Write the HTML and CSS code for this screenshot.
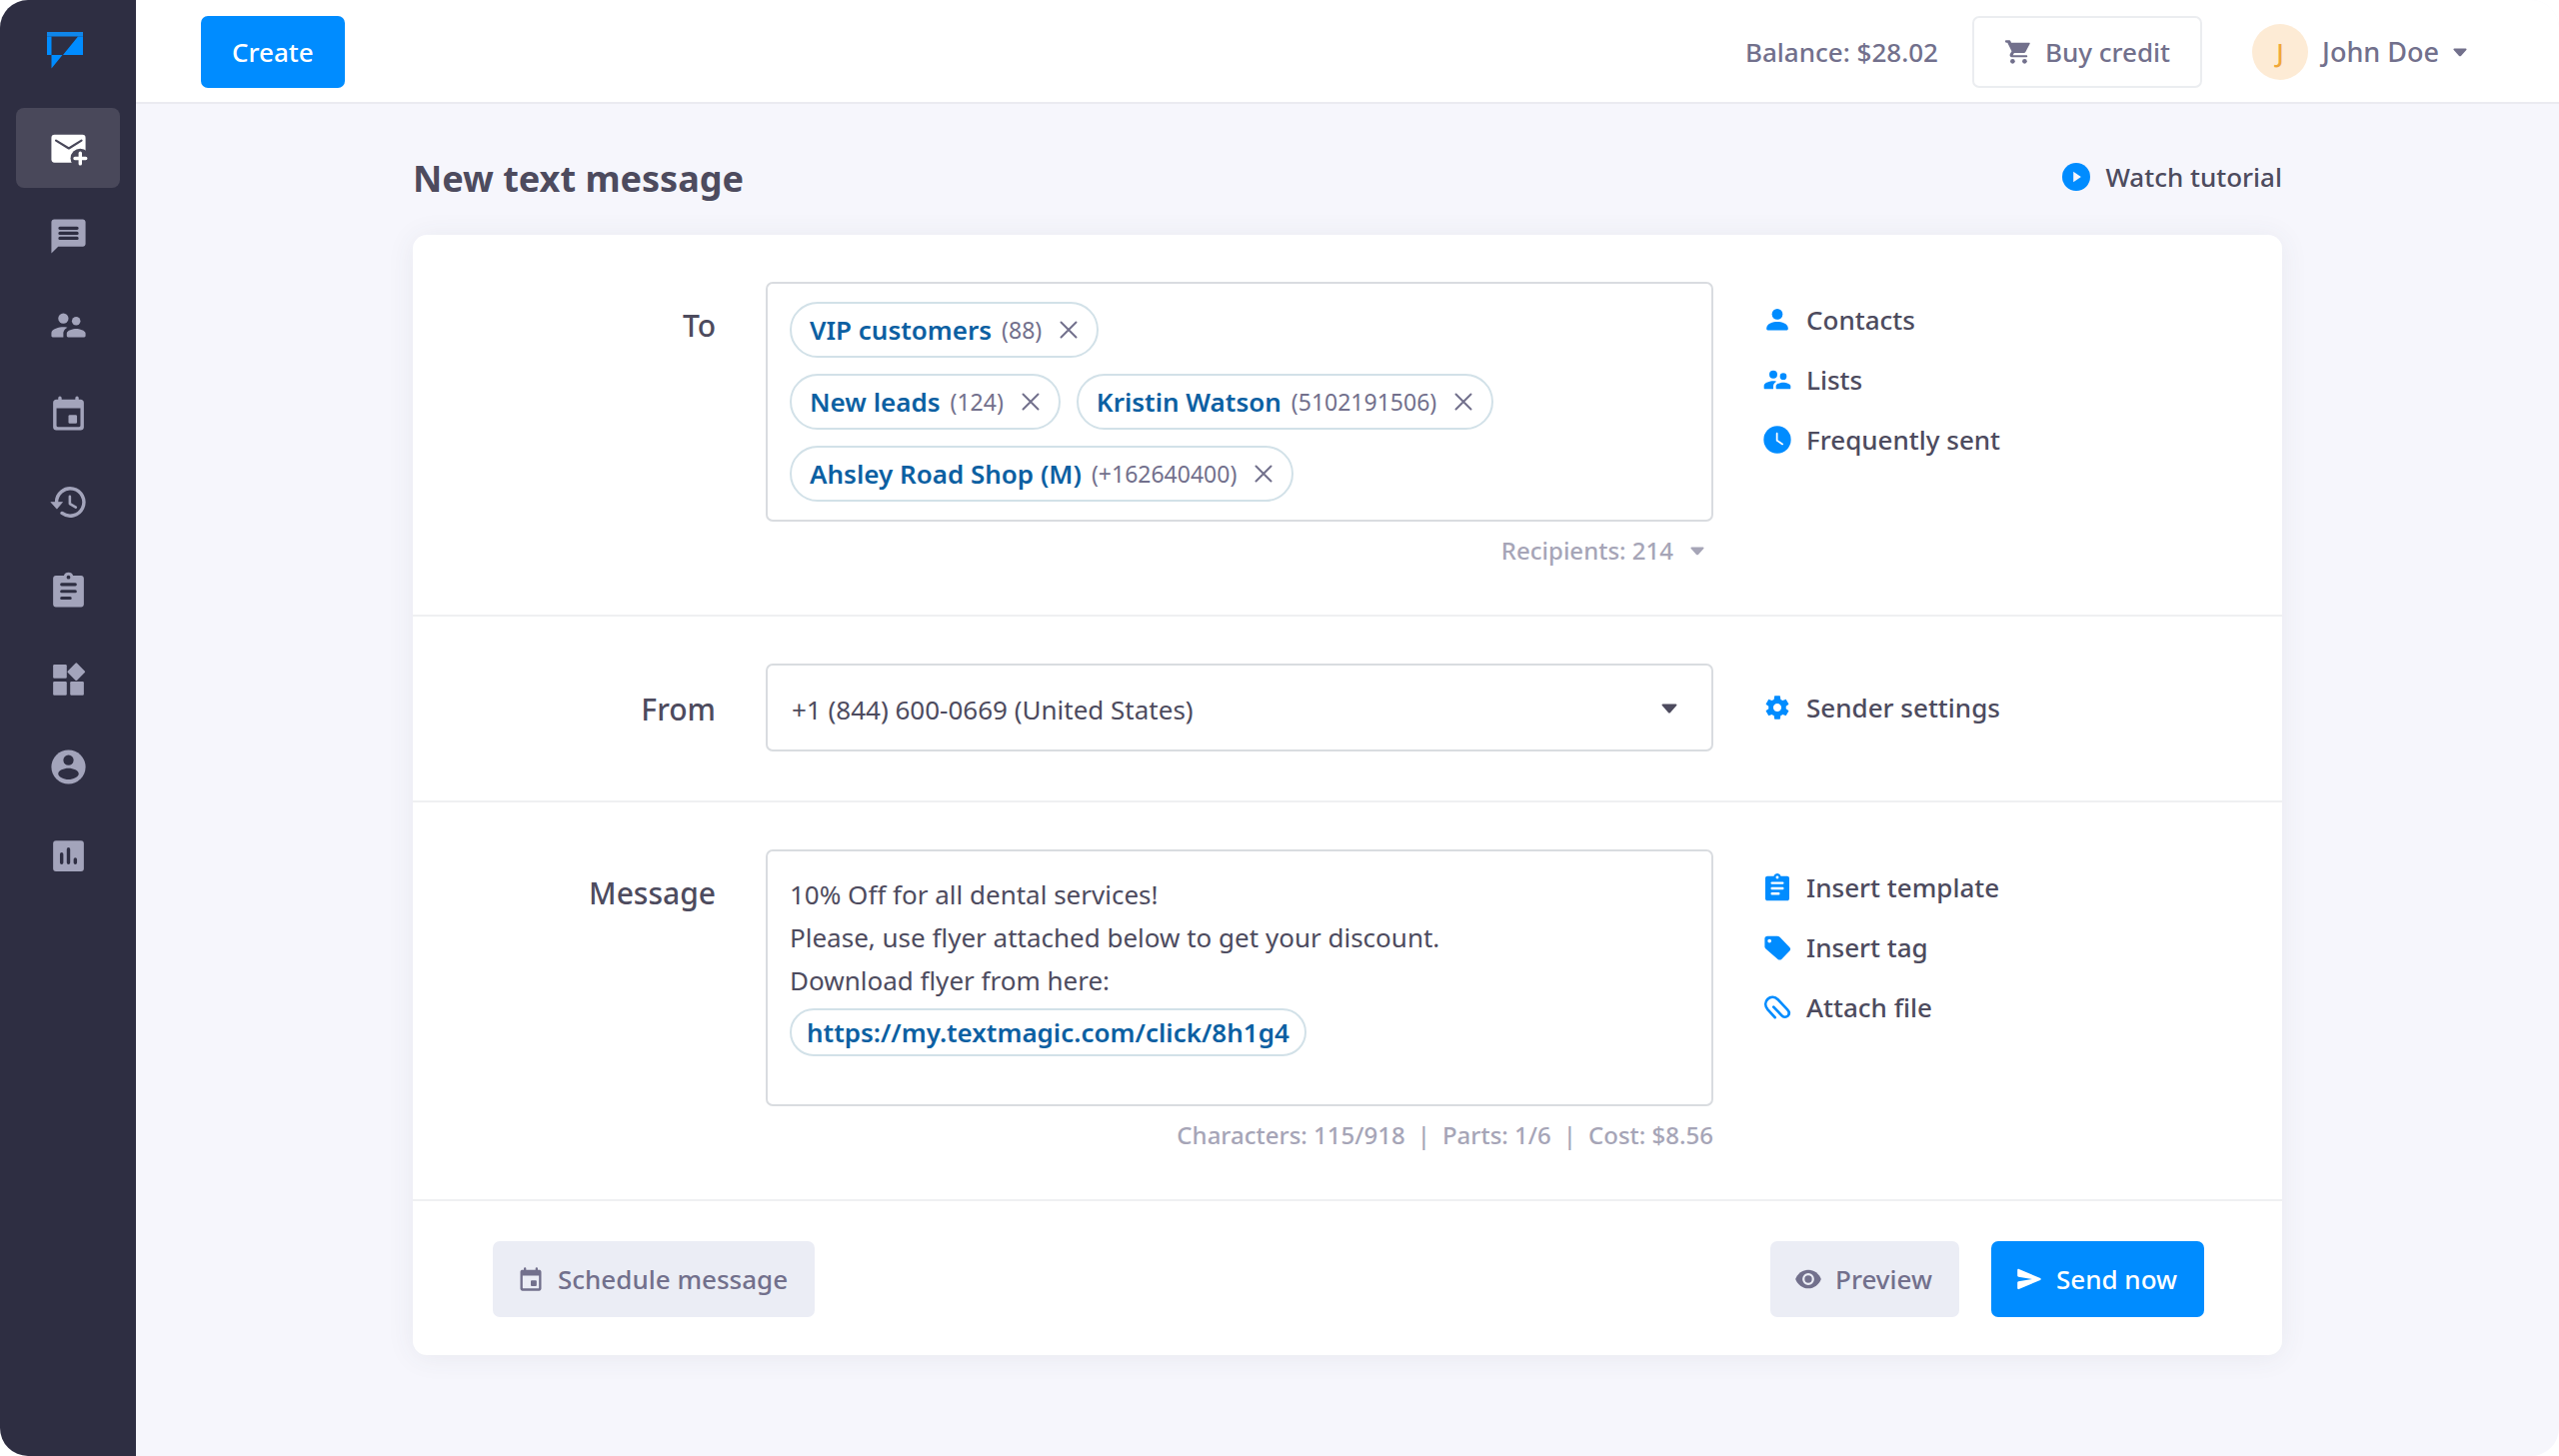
FILE: index.html
```html
<!DOCTYPE html>
<html lang="en">
<head>
<meta charset="utf-8">
<title>New text message</title>
<link rel="stylesheet" href="styles.css">
</head>
<body>
<svg class="sprite" aria-hidden="true">
  <symbol id="i-compose" viewBox="0 0 24 24"><rect x="2" y="4" width="20" height="16.3" rx="1.8"/><path class="cut" stroke-width="1.3" d="M4.7 7.4l7.5 4.6 7.4-4.6"/><circle class="hole" cx="18.9" cy="17.8" r="5.7"/><path d="M18.9 14.8v6.2M15.8 17.9h6.3" fill="none" stroke="currentColor" stroke-width="2" stroke-linecap="round"/></symbol>
  <symbol id="i-chat" viewBox="0 0 24 24"><path d="M20.4 2H3.6C2.7 2 2 2.7 2 3.6V22l4-4h14.400c.9 0 1.600-.7 1.600-1.600V3.600c0-.9-.7-1.600-1.600-1.600z"/><path class="cut" stroke-width="1.900" d="M7 7.200h10M7 10.200h10M7 13.100h10"/></symbol>
  <symbol id="i-people" viewBox="0 0 24 24"><circle cx="9" cy="8" r="3"/><circle cx="16.500" cy="9.500" r="2.500"/><path d="M16.500 14c-1.830 0-5.500.92-5.500 2.750V18.200c0 .5.3.8.8.8h9.400c.5 0 .8-.3.8-.8v-1.450c0-1.830-3.670-2.750-5.500-2.750zM9 13c-2.330 0-7 1.170-7 3.500v1.700c0 .5.3.8.8.8H9v-2.250c0-.85.33-2.340 2.370-3.470C10.500 13.100 9.660 13 9 13z"/></symbol>
  <symbol id="i-calendar" viewBox="0 0 24 24"><path fill-rule="evenodd" d="M19.200 4H18V3a1 1 0 0 0-2 0v1H8V3a1 1 0 0 0-2 0v1H4.800C3.800 4 3 4.800 3 5.800v14.400c0 1 .8 1.800 1.800 1.800h14.400c1 0 1.800-.8 1.800-1.800V5.800c0-1-.8-1.800-1.800-1.800zM18.200 20H5.800c-.5 0-.8-.3-.8-.8V9h14v10.200c0 .5-.3.8-.8.8z"/><rect x="12" y="13" width="5" height="5" rx=".8"/></symbol>
  <symbol id="i-history" viewBox="0 0 24 24"><path d="M5 12a8 8 0 1 1 3.200 6.400" fill="none" stroke="currentColor" stroke-width="2" stroke-linecap="round"/><path d="M1.700 12h6.800l-3.300 3.900z" stroke="currentColor" stroke-width=".4" stroke-linejoin="round"/><path d="M12.800 8.600v4.300l3.500 2.100" fill="none" stroke="currentColor" stroke-width="1.500" stroke-linecap="round" stroke-linejoin="round"/></symbol>
  <symbol id="i-clipboard" viewBox="0 0 24 24"><path d="M19.400 3.500h-4.700a2.850 2.850 0 0 0-5.400 0H4.600C3.700 3.500 3 4.200 3 5.100v15.300c0 .9.7 1.600 1.600 1.600h14.800c.9 0 1.600-.7 1.600-1.600V5.100c0-.9-.7-1.600-1.600-1.600z"/><circle class="hole" cx="12" cy="4.500" r="1.100"/><path class="cut" stroke-width="1.800" d="M8 8.700h8M8 12.700h8M8 16.700h5"/></symbol>
  <symbol id="i-widgets" viewBox="0 0 24 24"><rect x="3" y="3.500" width="8" height="8" rx=".7"/><rect x="3" y="13.500" width="8" height="8" rx=".7"/><rect x="13" y="13.500" width="8" height="8" rx=".7"/><rect x="12.700" y="3.900" width="7.700" height="7.700" rx=".7" transform="rotate(45 16.550 7.750)"/></symbol>
  <symbol id="i-account" viewBox="0 0 24 24"><circle cx="12" cy="12" r="10"/><circle class="hole" cx="12" cy="8" r="3"/><path class="hole" d="M12 12.800c-2.800 0-6 1.400-6 3.100 0 1.800 3.200 3.400 6 3.400s6-1.600 6-3.400c0-1.700-3.200-3.100-6-3.100z"/></symbol>
  <symbol id="i-chart" viewBox="0 0 24 24"><rect x="3" y="3" width="18" height="18" rx="1.700"/><path class="cut" stroke-width="2" d="M8 11v5M12 8v8M16 14v2"/></symbol>
  <symbol id="i-cart" viewBox="0 0 24 24"><path d="M1.800 2h2.700c.4 0 .7.200.9.600L6 4h15.400c.5 0 .8.400.6.900l-3.600 6.800c-.4.700-1 1.100-1.800 1.100H8.500l-1.100 2h11.600c.5 0 .9.400.9.900s-.4.900-.9.900H6.700c-1.500 0-2.400-1.500-1.700-2.800l1.400-2.500L2.800 4h-1c-.6 0-1-.4-1-1s.4-1 1-1z"/><path d="M6 4.500h15l-4.300 7.700H8z"/><circle cx="7.200" cy="20" r="2"/><circle cx="17.500" cy="20" r="2"/></symbol>
  <symbol id="i-play" viewBox="0 0 24 24"><circle cx="12" cy="12" r="12"/><path class="hole" d="M9.600 7.600v8.800L16.200 12z"/></symbol>
  <symbol id="i-person" viewBox="0 0 24 24"><circle cx="12" cy="7.200" r="4.600"/><path d="M12 13.800c-3.700 0-9.200 1.700-9.200 5.200v1c0 .6.400 1 1 1h16.400c.6 0 1-.4 1-1v-1c0-3.500-5.500-5.200-9.200-5.200z"/></symbol>
  <symbol id="i-clock" viewBox="0 0 24 24"><circle cx="12" cy="12" r="11.700"/><path class="cut" stroke-width="1.500" d="M11.700 6.600v6l4.700 3.200"/></symbol>
  <symbol id="i-gear" viewBox="0 0 24 24"><path fill-rule="evenodd" d="M19.430 12.980c.04-.32.07-.64.07-.98s-.03-.66-.07-.98l2.110-1.650c.19-.15.24-.42.12-.64l-2-3.460c-.12-.22-.39-.3-.61-.22l-2.490 1c-.52-.4-1.080-.73-1.690-.98l-.38-2.650C14.460 2.180 14.250 2 14 2h-4c-.25 0-.46.18-.49.42l-.38 2.650c-.61.25-1.170.59-1.690.98l-2.490-1c-.23-.09-.49 0-.61.22l-2 3.460c-.13.22-.07.49.12.64l2.110 1.650c-.04.32-.07.65-.07.98s.03.66.07.98l-2.110 1.650c-.19.15-.24.42-.12.64l2 3.460c.12.22.39.3.61.22l2.490-1c.52.4 1.080.73 1.690.98l.38 2.650c.03.24.24.42.49.42h4c.25 0 .46-.18.49-.42l.38-2.650c.61-.25 1.170-.59 1.690-.98l2.490 1c.23.09.49 0 .61-.22l2-3.460c.12-.22.07-.49-.12-.64l-2.110-1.650zM12 15.500c-1.930 0-3.500-1.570-3.500-3.500s1.570-3.500 3.500-3.500 3.500 1.570 3.500 3.500-1.570 3.500-3.500 3.500z"/></symbol>
  <symbol id="i-tag" viewBox="0 0 24 24"><path fill-rule="evenodd" d="M22.600 11.900L14.200 3.300C13.500 2.600 13 2.300 12 2.300H3.500C2.200 2.300 1.200 3.300 1.200 4.600v6.600c0 .9.200 1.400.9 2l10.400 9c.9.800 2.200.8 3.100 0l7-7.100c.9-.9.9-2.300 0-3.200zM5.300 8.100a1.600 1.600 0 1 1 0-3.200 1.600 1.600 0 0 1 0 3.200z"/></symbol>
  <symbol id="i-clip" viewBox="0 0 24 24"><path fill="none" stroke="currentColor" stroke-width="2.300" stroke-linecap="round" stroke-linejoin="round" d="M10 20.700L3.900 14C1.300 11 1.300 7.300 3.800 4.900c2.500-2.300 6.100-2.200 8.700.4l8.200 8.700c1.700 1.900 1.700 4 .3 5.400-1.500 1.400-3.700 1.200-5.300-.5L8.800 11.700"/></symbol>
  <symbol id="i-eye" viewBox="0 0 24 24"><path d="M12 4C7 4 2.700 7.300 1 12c1.700 4.700 6 8 11 8s9.300-3.300 11-8c-1.700-4.700-6-8-11-8z"/><circle class="cut" cx="12" cy="12" r="4.100" stroke-width="1.900"/></symbol>
  <symbol id="i-send" viewBox="0 0 24 24"><path d="M3.200 20.600l18.300-7.800c.8-.3.8-1.400 0-1.700L3.200 3.400c-.6-.3-1.300.2-1.300.8v4.900c0 .5.4.9.900 1L14.500 12 2.800 13.900c-.5.1-.9.500-.9 1v4.900c0 .6.700 1.100 1.300.8z"/></symbol>
  <symbol id="i-close" viewBox="0 0 18 18"><path fill="none" stroke="currentColor" stroke-width="2" stroke-linecap="round" d="M1.500 1.500l15 15M16.500 1.500l-15 15"/></symbol>
  <symbol id="i-caret" viewBox="0 0 16 10"><path d="M1.500.5h13c.9 0 1.300 1 .7 1.600L9.100 8.900c-.6.700-1.600.7-2.200 0L.8 2.100C.2 1.500.6.500 1.500.5z"/></symbol>
</svg>

<div class="app">
  <aside class="sidebar">
    <a class="logo" href="#" aria-label="Home">
      <svg class="logo-mark" viewBox="0 0 36 37"><path fill="#0f86ea" d="M0 0h36v4.500H0z"/><path fill="#008cff" d="M0 4.500h4.500V23H0zM31 4.500h5V23H16zM4.500 23h11l-11 13.500z"/></svg>
    </a>
    <nav class="nav" aria-label="Main">
      <a class="nav-item nav-item--active" href="#" aria-label="Compose" aria-current="page"><svg><use href="#i-compose"/></svg></a>
      <a class="nav-item" href="#" aria-label="Chats"><svg><use href="#i-chat"/></svg></a>
      <a class="nav-item" href="#" aria-label="Contacts"><svg><use href="#i-people"/></svg></a>
      <a class="nav-item" href="#" aria-label="Calendar"><svg><use href="#i-calendar"/></svg></a>
      <a class="nav-item" href="#" aria-label="History"><svg><use href="#i-history"/></svg></a>
      <a class="nav-item" href="#" aria-label="Templates"><svg><use href="#i-clipboard"/></svg></a>
      <a class="nav-item" href="#" aria-label="Services"><svg><use href="#i-widgets"/></svg></a>
      <a class="nav-item" href="#" aria-label="Account"><svg><use href="#i-account"/></svg></a>
      <a class="nav-item" href="#" aria-label="Reports"><svg><use href="#i-chart"/></svg></a>
    </nav>
  </aside>

  <div class="page">
    <header class="topbar">
      <button class="btn btn--primary btn--create" type="button">Create</button>
      <div class="topbar-right">
        <span class="balance">Balance: $28.02</span>
        <button class="btn btn--outline" type="button"><svg class="icon-28"><use href="#i-cart"/></svg>Buy credit</button>
        <button class="user" type="button"><span class="avatar">J</span><span>John Doe</span><svg class="caret"><use href="#i-caret"/></svg></button>
      </div>
    </header>

    <main class="content">
      <div class="heading">
        <h1>New text message</h1>
        <a class="link link--tutorial" href="#"><svg class="icon-28"><use href="#i-play"/></svg>Watch tutorial</a>
      </div>

      <form class="card">
        <section class="row">
          <span class="label" id="to-label">To</span>
          <div class="field">
            <div class="box recipients" role="group" aria-labelledby="to-label">
              <div class="chips">
                <span class="chip"><b>VIP customers</b><span class="count">(88)</span><button type="button" aria-label="Remove VIP customers"><svg><use href="#i-close"/></svg></button></span>
              </div>
              <div class="chips">
                <span class="chip"><b>New leads</b><span class="count">(124)</span><button type="button" aria-label="Remove New leads"><svg><use href="#i-close"/></svg></button></span>
                <span class="chip"><b>Kristin Watson</b><span class="count">(5102191506)</span><button type="button" aria-label="Remove Kristin Watson"><svg><use href="#i-close"/></svg></button></span>
              </div>
              <div class="chips">
                <span class="chip"><b>Ahsley Road Shop (M)</b><span class="count">(+162640400)</span><button type="button" aria-label="Remove Ahsley Road Shop (M)"><svg><use href="#i-close"/></svg></button></span>
              </div>
            </div>
            <button class="meta meta--toggle" type="button">Recipients: 214<svg class="caret"><use href="#i-caret"/></svg></button>
          </div>
          <div class="links">
            <a class="link" href="#"><svg class="icon-28"><use href="#i-person"/></svg>Contacts</a>
            <a class="link" href="#"><svg class="icon-32"><use href="#i-people"/></svg>Lists</a>
            <a class="link" href="#"><svg class="icon-28"><use href="#i-clock"/></svg>Frequently sent</a>
          </div>
        </section>

        <section class="row row--center">
          <label class="label" for="from">From</label>
          <div class="field select">
            <select class="box" id="from"><option>+1 (844) 600-0669 (United States)</option></select>
            <svg class="caret"><use href="#i-caret"/></svg>
          </div>
          <div class="links">
            <a class="link" href="#"><svg class="icon-28"><use href="#i-gear"/></svg>Sender settings</a>
          </div>
        </section>

        <section class="row">
          <span class="label" id="message-label">Message</span>
          <div class="field">
            <div class="box message" role="textbox" aria-multiline="true" aria-labelledby="message-label" contenteditable="true" spellcheck="false"><p>10% Off for all dental services!</p><p>Please, use flyer attached below to get your discount.</p><p>Download flyer from here:</p><a class="pill" href="#">https://my.textmagic.com/click/8h1g4</a></div>
            <div class="meta"><span>Characters: 115/918</span><span>|</span><span>Parts: 1/6</span><span>|</span><span>Cost: $8.56</span></div>
          </div>
          <div class="links">
            <a class="link" href="#"><svg class="icon-32"><use href="#i-clipboard"/></svg>Insert template</a>
            <a class="link" href="#"><svg class="icon-28"><use href="#i-tag"/></svg>Insert tag</a>
            <a class="link" href="#"><svg class="icon-28"><use href="#i-clip"/></svg>Attach file</a>
          </div>
        </section>

        <footer class="actions">
          <button class="btn btn--soft" type="button"><svg class="icon-28"><use href="#i-calendar"/></svg>Schedule message</button>
          <div class="actions-right">
            <button class="btn btn--soft" type="button"><svg class="icon-28"><use href="#i-eye"/></svg>Preview</button>
            <button class="btn btn--primary" type="submit"><svg class="icon-28"><use href="#i-send"/></svg>Send now</button>
          </div>
        </footer>
      </form>
    </main>
  </div>
</div>
</body>
</html>
```
FILE: styles.css
```css
:root {
  --blue: #008cff;
  --navy: #2e2e42;
  --navy-active: #49485a;
  --text: #4d4b5e;
  --muted: #72708c;
  --faint: #a6a5b7;
  --page: #f6f6fc;
  --soft: #ebedf5;
}

* { box-sizing: border-box; }

body {
  margin: 0;
  background: #fff;
  color: var(--text);
  font: 500 26px/36px "Noto Sans", "Open Sans", sans-serif;
}

h1, p { margin: 0; }

a { color: inherit; text-decoration: none; }

button {
  border: 0;
  padding: 0;
  background: none;
  color: inherit;
  font: inherit;
  cursor: pointer;
}

svg { display: block; flex: none; fill: currentColor; }

.sprite { position: absolute; width: 0; height: 0; }

.cut {
  fill: none;
  stroke: var(--cut, #fff);
  stroke-linecap: round;
  stroke-linejoin: round;
}

.hole { fill: var(--cut, #fff); }

.icon-28 { width: 28px; height: 28px; }
.icon-32 { width: 32px; height: 32px; margin: 0 -2px; }
.caret { width: 14px; height: 9px; }

.app {
  display: flex;
  min-height: 100vh;
  border-radius: 28px;
  overflow: hidden;
  background: var(--page);
}

/* Sidebar */
.sidebar {
  flex: none;
  width: 136px;
  padding: 32px 16px;
  background: var(--navy);
}

.logo { display: block; padding-left: 31px; }
.logo-mark { width: 36px; height: 37px; }

.nav {
  --cut: var(--navy);
  display: flex;
  flex-direction: column;
  justify-content: space-between;
  height: 788px;
  margin-top: 39px;
  color: #a3a4bb;
}

.nav-item {
  display: flex;
  align-items: center;
  justify-content: center;
  height: 80px;
  border-radius: 8px;
}

.nav-item svg { width: 41px; height: 41px; }

.nav-item--active {
  --cut: var(--navy-active);
  background: var(--navy-active);
  color: #fff;
}

/* Top bar */
.page { flex: 1; min-width: 0; }

.topbar {
  display: flex;
  align-items: center;
  justify-content: space-between;
  padding: 16px 92px 14px 65px;
  border-bottom: 2px solid #ebebf0;
  background: #fff;
  color: var(--muted);
}

.topbar-right { display: flex; align-items: center; }
.balance { margin-right: 34px; }

.btn {
  display: flex;
  align-items: center;
  gap: 13px;
  height: 76px;
  padding: 0 27px 0 24px;
  border-radius: 7px;
}

.btn--primary { --cut: var(--blue); background: var(--blue); color: #fff; }
.btn--soft { --cut: var(--soft); background: var(--soft); color: var(--muted); }
.btn--create { height: 72px; padding: 0 31px; }

.btn--outline {
  height: 72px;
  padding: 0 30px;
  border: 2px solid #ebedf0;
}

.user {
  display: flex;
  align-items: center;
  gap: 14px;
  margin-left: 50px;
  font-size: 27px;
}

.avatar {
  width: 56px;
  border-radius: 50%;
  background: #fdebd5;
  color: #f0a73a;
  font-size: 26px;
  line-height: 56px;
  text-align: center;
}

/* Content */
.content {
  max-width: 1950px;
  margin: 0 auto;
  padding: 50px 40px 100px;
}

.heading {
  display: flex;
  align-items: center;
  justify-content: space-between;
  margin-bottom: 31px;
}

h1 { font-size: 36px; line-height: 50px; font-weight: 700; }

.link { display: flex; align-items: center; gap: 15px; }
.link svg { color: var(--blue); }
.link--tutorial { --cut: var(--page); padding-bottom: 4px; }

.card {
  border-radius: 14px;
  background: #fff;
  box-shadow: 0 2px 28px rgba(70, 80, 90, .08);
}

.row {
  display: grid;
  grid-template-columns: 303fr 948fr 519fr;
  gap: 50px;
  padding: 47px 0 49px;
  border-bottom: 2px solid #eff0f2;
}

.label {
  padding-top: 24px;
  font-size: 30px;
  line-height: 40px;
  text-align: right;
}

.links {
  display: flex;
  flex-direction: column;
  align-items: flex-start;
  gap: 24px;
  padding-top: 20px;
}

.row--center { align-items: center; }
.row--center .label { padding-top: 4px; }
.row--center .links { padding-top: 0; }

.box {
  display: block;
  width: 100%;
  border: 2px solid #d9dce0;
  border-radius: 7px;
  background: #fff;
  color: inherit;
}

.recipients {
  display: flex;
  flex-direction: column;
  gap: 16px;
  padding: 18px 22px;
}

.chips { display: flex; gap: 16px; }

.chip {
  display: flex;
  align-items: center;
  height: 56px;
  padding: 0 19px 0 18px;
  border: 2px solid #d2e1e8;
  border-radius: 28px;
  color: var(--muted);
}

.chip b { color: #0c60a2; font-weight: 600; }

.count { margin: 0 18px 0 10px; font-size: 23px; font-weight: 400; }
.chip svg { width: 18px; height: 18px; }

.meta {
  display: flex;
  justify-content: flex-end;
  gap: 12px;
  margin-top: 14px;
  color: var(--faint);
  font-size: 24px;
  line-height: 30px;
}

.meta--toggle { align-items: center; gap: 17px; margin-left: auto; padding-right: 9px; }

.select { position: relative; }

select.box {
  height: 88px;
  padding: 4px 60px 0 24px;
  appearance: none;
  font: inherit;
  font-weight: 400;
}

.select .caret {
  position: absolute;
  top: 40px;
  right: 36px;
  width: 16px;
  height: 10px;
  pointer-events: none;
}

.message { padding: 22px 22px 48px; font-weight: 400; line-height: 43px; }

.pill {
  display: block;
  width: fit-content;
  margin-top: 6px;
  padding: 0 15px;
  border: 2px solid #d2e1e8;
  border-radius: 24px;
  color: #0c60a2;
  font-weight: 600;
  line-height: 44px;
}

.actions {
  display: flex;
  justify-content: space-between;
  padding: 40px 78px 38px 80px;
}

.actions-right { display: flex; gap: 32px; }
```
